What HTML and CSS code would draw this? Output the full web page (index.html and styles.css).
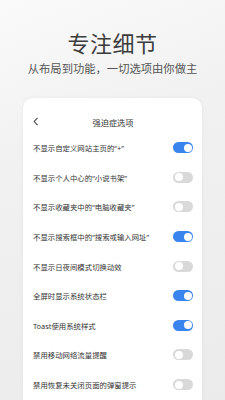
FILE: index.html
```html
<!DOCTYPE html>
<html lang="zh">
<head>
<meta charset="utf-8">
<link rel="stylesheet" href="styles.css">
</head>
<body>
<div class="hero">
  <h1 class="title">专注细节</h1>
  <p class="subtitle">从布局到功能，一切选项由你做主</p>
</div>
<div class="card">
  <div class="card-head">
    <svg class="back" width="6" height="9" viewBox="0 0 6 9"><polyline points="4.5,0.8 1.2,4.5 4.5,8.2" fill="none" stroke="#444" stroke-width="1.1"/></svg>
    <span class="card-title">强迫症选项</span>
  </div>
  <div class="row"><span>不显示自定义网站主页的“+”</span><i class="tg on"></i></div>
  <div class="row"><span>不显示个人中心的“小说书架”</span><i class="tg"></i></div>
  <div class="row"><span>不显示收藏夹中的“电脑收藏夹”</span><i class="tg"></i></div>
  <div class="row"><span>不显示搜索框中的“搜索或输入网址”</span><i class="tg on"></i></div>
  <div class="row"><span>不显示日夜间模式切换动效</span><i class="tg"></i></div>
  <div class="row"><span>全屏时显示系统状态栏</span><i class="tg on"></i></div>
  <div class="row"><span>Toast使用系统样式</span><i class="tg on"></i></div>
  <div class="row"><span>禁用移动网络流量提醒</span><i class="tg"></i></div>
  <div class="row"><span>禁用恢复未关闭页面的弹窗提示</span><i class="tg"></i></div>
</div>
</body>
</html>
```
FILE: styles.css
```css
html, body {
  margin: 0;
  padding: 0;
  height: 400px;
  overflow: hidden;
}
body {
  display: flex;
  flex-direction: column;
  font-family: "Noto Sans", "Noto Sans CJK SC", sans-serif;
  background: linear-gradient(160deg, #fafafa 0%, #f1f1f1 35%, #ebebeb 100%);
}
.hero {
  padding-top: 30px;
  text-align: center;
}
.title {
  margin: 0;
  font-size: 22px;
  line-height: 26px;
  font-weight: 400;
  color: #3c3c3c;
  letter-spacing: 0.5px;
}
.subtitle {
  margin: 6px 0 0;
  font-size: 11.3px;
  line-height: 14px;
  color: #555;
}
.card {
  flex: 1;
  min-height: 0;
  overflow: hidden;
  margin: 22px 23px 0;
  background: #fff;
  border-radius: 10px 10px 0 0;
  padding: 14px 9px 0 10px;
  box-shadow: 0 0 4px rgba(0,0,0,0.05);
}
.card-head {
  position: relative;
  height: 20px;
  display: flex;
  align-items: center;
  justify-content: center;
  margin-bottom: 1px;
}
.back {
  position: absolute;
  left: 0;
  top: 5px;
}
.card-title {
  font-size: 8.2px;
  color: #333;
}
.row {
  height: 29.6px;
  display: flex;
  align-items: center;
  justify-content: space-between;
  font-size: 7.4px;
  color: #333;
}
.tg {
  width: 20px;
  height: 11px;
  border-radius: 6px;
  background: #d9d9d9;
  position: relative;
  flex: none;
}
.tg::after {
  content: "";
  position: absolute;
  top: 1.5px;
  left: 1.5px;
  width: 8px;
  height: 8px;
  border-radius: 50%;
  background: #fff;
}
.tg.on {
  background: #3a84ee;
}
.tg.on::after {
  left: 10.5px;
}
```
